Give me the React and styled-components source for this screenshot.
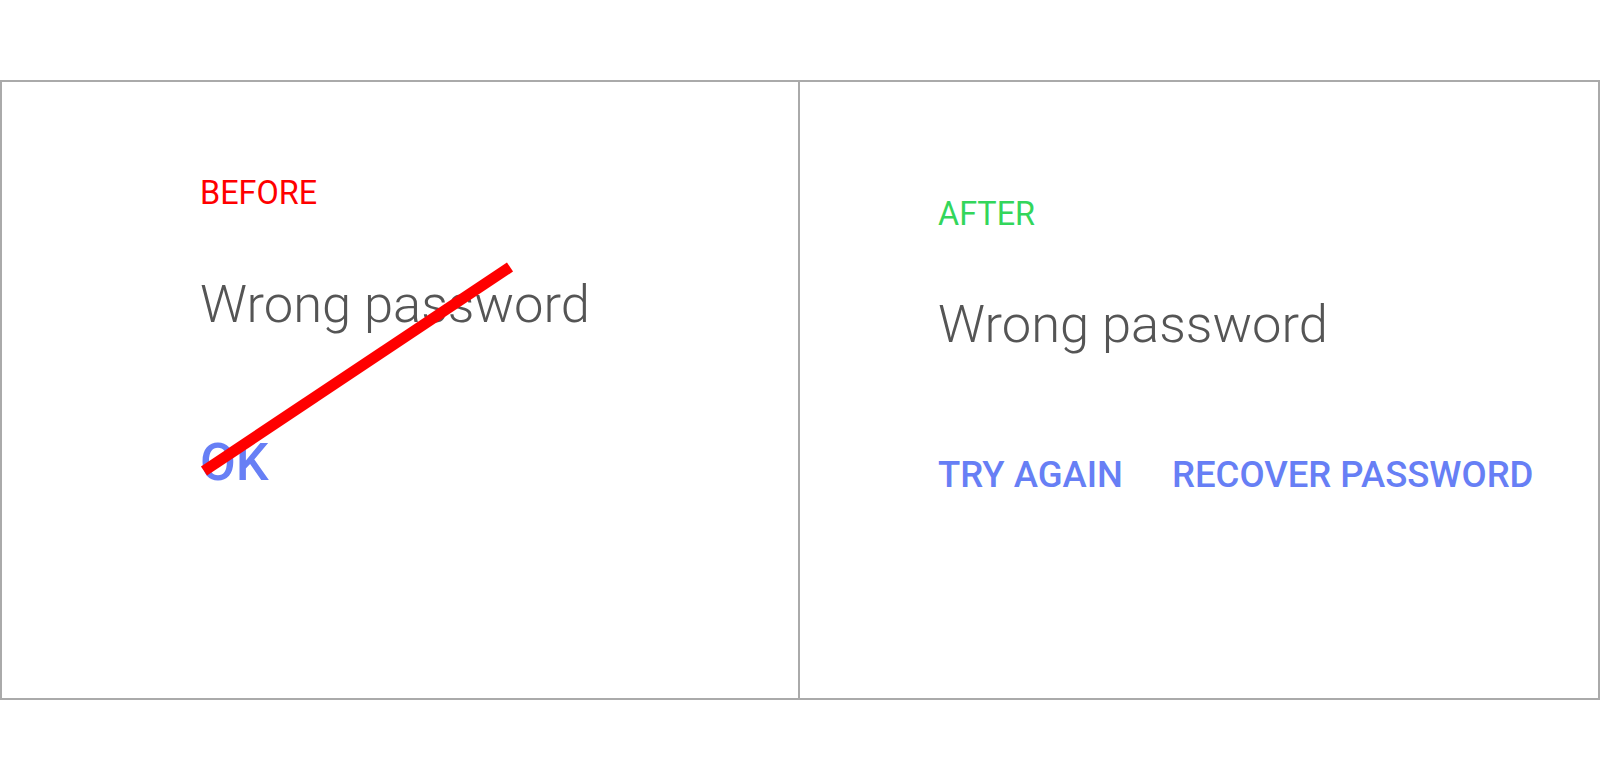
import React from "react";
import styled, { createGlobalStyle } from "styled-components";

const GlobalStyle = createGlobalStyle`
  html, body {
    margin: 0;
    padding: 0;
    background: #ffffff;
    font-family: Roboto, "Liberation Sans", sans-serif;
  }
`;

const Page = styled.div`
  width: 1600px;
  height: 760px;
  padding-top: 80px;
  box-sizing: border-box;
`;

const Frame = styled.div`
  display: grid;
  grid-template-columns: 798px 800px;
  width: 1600px;
  height: 620px;
  box-sizing: border-box;
  border: 2px solid #aaaaaa;
  border-left: none;
`;

const Panel = styled.div`
  position: relative;
  display: flex;
  flex-direction: column;
  align-items: flex-start;
  box-sizing: border-box;
  border-left: 2px solid #aaaaaa;
  padding-top: ${(p) => p.$top}px;
  padding-left: ${(p) => p.$left}px;
`;

const Tag = styled.div`
  font-size: 32.4px;
  line-height: 30px;
  font-weight: 400;
  text-transform: uppercase;
  color: ${(p) => p.$color};
`;

const Message = styled.div`
  margin-top: ${(p) => p.$gap}px;
  font-size: 52.5px;
  line-height: 54px;
  font-weight: 300;
  color: #555555;
`;

const Actions = styled.div`
  display: flex;
  gap: ${(p) => p.$spacing || 0}px;
  margin-top: ${(p) => p.$gap}px;
`;

const TextButton = styled.button`
  border: none;
  background: none;
  padding: 0;
  margin: 0;
  font-family: inherit;
  font-size: ${(p) => p.$size}px;
  line-height: 1;
  font-weight: 500;
  color: #677ff5;
  text-transform: uppercase;
  cursor: pointer;
`;

const Strike = styled.svg`
  position: absolute;
  inset: 0;
  width: 100%;
  height: 100%;
  pointer-events: none;
`;

export default function App() {
  return (
    <>
      <GlobalStyle />
      <Page>
        <Frame>
          <Panel $top={96} $left={198}>
            <Tag $color="#ff0000">Before</Tag>
            <Message $gap={69}>Wrong password</Message>
            <Actions $gap={106}>
              <TextButton $size={52}>OK</TextButton>
            </Actions>
            <Strike>
              <line x1="202" y1="389" x2="508" y2="185" stroke="#ff0000" strokeWidth="11" />
            </Strike>
          </Panel>
          <Panel $top={117} $left={138}>
            <Tag $color="#33d65b">After</Tag>
            <Message $gap={68}>Wrong password</Message>
            <Actions $gap={106} $spacing={49}>
              <TextButton $size={36.5}>Try again</TextButton>
              <TextButton $size={36.5}>Recover password</TextButton>
            </Actions>
          </Panel>
        </Frame>
      </Page>
    </>
  );
}
